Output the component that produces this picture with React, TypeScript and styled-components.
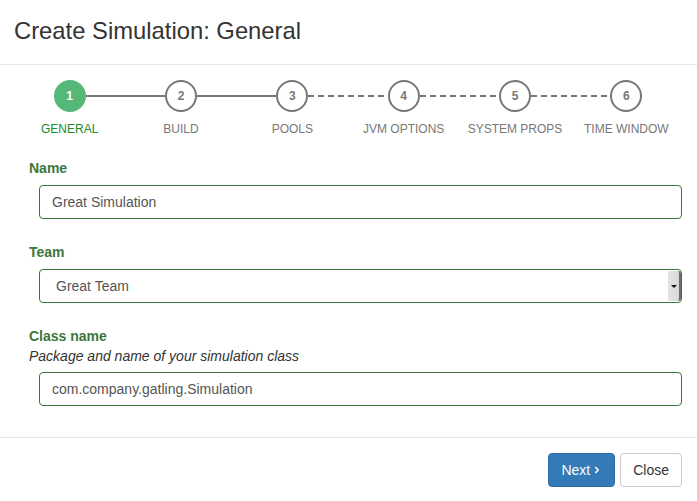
import React from "react";
import styled, { createGlobalStyle } from "styled-components";
import { ChevronRight } from "lucide-react";

const Global = createGlobalStyle`
  html, body { margin: 0; padding: 0; background: #fff; }
  body { font-family: "Liberation Sans", Arial, sans-serif; font-size: 14px; color: #333; }
  * { box-sizing: border-box; }
`;

const Modal = styled.div`
  width: 697px;
  height: 501px;
  background: #fff;
  display: flex;
  flex-direction: column;
  overflow: hidden;
`;

const Header = styled.div`
  padding: 18px 14px 20px;
  border-bottom: 1px solid #e5e5e5;
`;

const Title = styled.h4`
  margin: 0;
  font-size: 23.8px;
  line-height: 1.1;
  font-weight: 400;
  color: #333;
`;

const Body = styled.div`
  padding: 15px 15px 31px 14px;
  border-bottom: 1px solid #e5e5e5;
`;

const Stepper = styled.ol`
  list-style: none;
  margin: 0;
  padding: 0;
  display: grid;
  grid-template-columns: repeat(6, 1fr);
`;

const Step = styled.li<{ $line?: "solid" | "dashed" }>`
  position: relative;
  display: flex;
  flex-direction: column;
  align-items: center;
  gap: 9px;
  &::after {
    content: "";
    display: ${(p) => (p.$line ? "block" : "none")};
    position: absolute;
    top: 15px;
    left: calc(50% + 16px);
    width: calc(100% - 32px);
    height: 2px;
    background: ${(p) =>
      p.$line === "dashed"
        ? "repeating-linear-gradient(90deg, #777 0 6px, transparent 6px 10px)"
        : "#777"};
  }
`;

const Circle = styled.span<{ $active?: boolean }>`
  width: 32px;
  height: 32px;
  border-radius: 50%;
  display: flex;
  align-items: center;
  justify-content: center;
  font-size: 12px;
  font-weight: 700;
  border: 2px solid ${(p) => (p.$active ? "#55b878" : "#777")};
  background: ${(p) => (p.$active ? "#55b878" : "#fff")};
  color: ${(p) => (p.$active ? "#fff" : "#777")};
`;

const StepLabel = styled.span<{ $active?: boolean }>`
  font-size: 12px;
  line-height: 17px;
  text-transform: uppercase;
  color: ${(p) => (p.$active ? "#1e8a28" : "#777")};
  white-space: nowrap;
`;

const Form = styled.form`
  margin: 20px 0 0 15px;
  display: flex;
  flex-direction: column;
  gap: 23px;
`;

const Group = styled.div`
  display: flex;
  flex-direction: column;
  gap: 7px;
`;

const Head = styled.div`
  display: flex;
  flex-direction: column;
`;

const Label = styled.label`
  font-weight: 700;
  font-size: 14px;
  line-height: 20px;
  color: #3c763d;
`;

const Help = styled.span`
  font-style: italic;
  font-size: 14px;
  line-height: 20px;
  color: #333;
  margin-bottom: -1px;
`;

const Input = styled.div`
  margin-left: 10px;
  height: 34px;
  border: 1px solid #3c763d;
  border-radius: 4px;
  padding: 0 12px;
  display: flex;
  align-items: center;
  font-size: 14px;
  color: #555;
`;

const SelectBox = styled(Input)`
  position: relative;
  padding-left: 16px;
`;

const SelectButton = styled.span`
  position: absolute;
  top: 1px;
  bottom: 1px;
  right: 0;
  width: 13px;
  background: linear-gradient(90deg, #e4e4e4, #d8d8d8);
  border-right: 2px solid #6b6b6b;
  border-radius: 0 3px 3px 0;
  display: flex;
  align-items: center;
  justify-content: center;
  &::before {
    content: "";
    border-left: 3px solid transparent;
    border-right: 3px solid transparent;
    border-top: 3px solid #111;
  }
`;

const Footer = styled.div`
  padding: 15px 15px;
  display: flex;
  justify-content: flex-end;
  gap: 5px;
`;

const Button = styled.button<{ $primary?: boolean }>`
  height: 34px;
  padding: 0 12px;
  border-radius: 4px;
  font-family: "Liberation Sans", Arial, sans-serif;
  font-size: 14px;
  display: inline-flex;
  align-items: center;
  gap: 2px;
  border: 1px solid ${(p) => (p.$primary ? "#2e6da4" : "#ccc")};
  background: ${(p) => (p.$primary ? "#337ab7" : "#fff")};
  color: ${(p) => (p.$primary ? "#fff" : "#333")};
`;

const steps = [
  "General",
  "Build",
  "Pools",
  "JVM Options",
  "System Props",
  "Time Window",
];

export default function App() {
  return (
    <>
      <Global />
      <Modal>
        <Header>
          <Title>Create Simulation: General</Title>
        </Header>
        <Body>
          <Stepper>
            {steps.map((s, i) => (
              <Step
                key={s}
                $line={i === 5 ? undefined : i < 2 ? "solid" : "dashed"}
              >
                <Circle $active={i === 0}>{i + 1}</Circle>
                <StepLabel $active={i === 0}>{s}</StepLabel>
              </Step>
            ))}
          </Stepper>
          <Form>
            <Group>
              <Label>Name</Label>
              <Input>Great Simulation</Input>
            </Group>
            <Group>
              <Label>Team</Label>
              <SelectBox>
                Great Team
                <SelectButton />
              </SelectBox>
            </Group>
            <Group>
              <Head>
                <Label>Class name</Label>
                <Help>Package and name of your simulation class</Help>
              </Head>
              <Input>com.company.gatling.Simulation</Input>
            </Group>
          </Form>
        </Body>
        <Footer>
          <Button $primary>
            Next<ChevronRight size={10} strokeWidth={4} />
          </Button>
          <Button>Close</Button>
        </Footer>
      </Modal>
    </>
  );
}
